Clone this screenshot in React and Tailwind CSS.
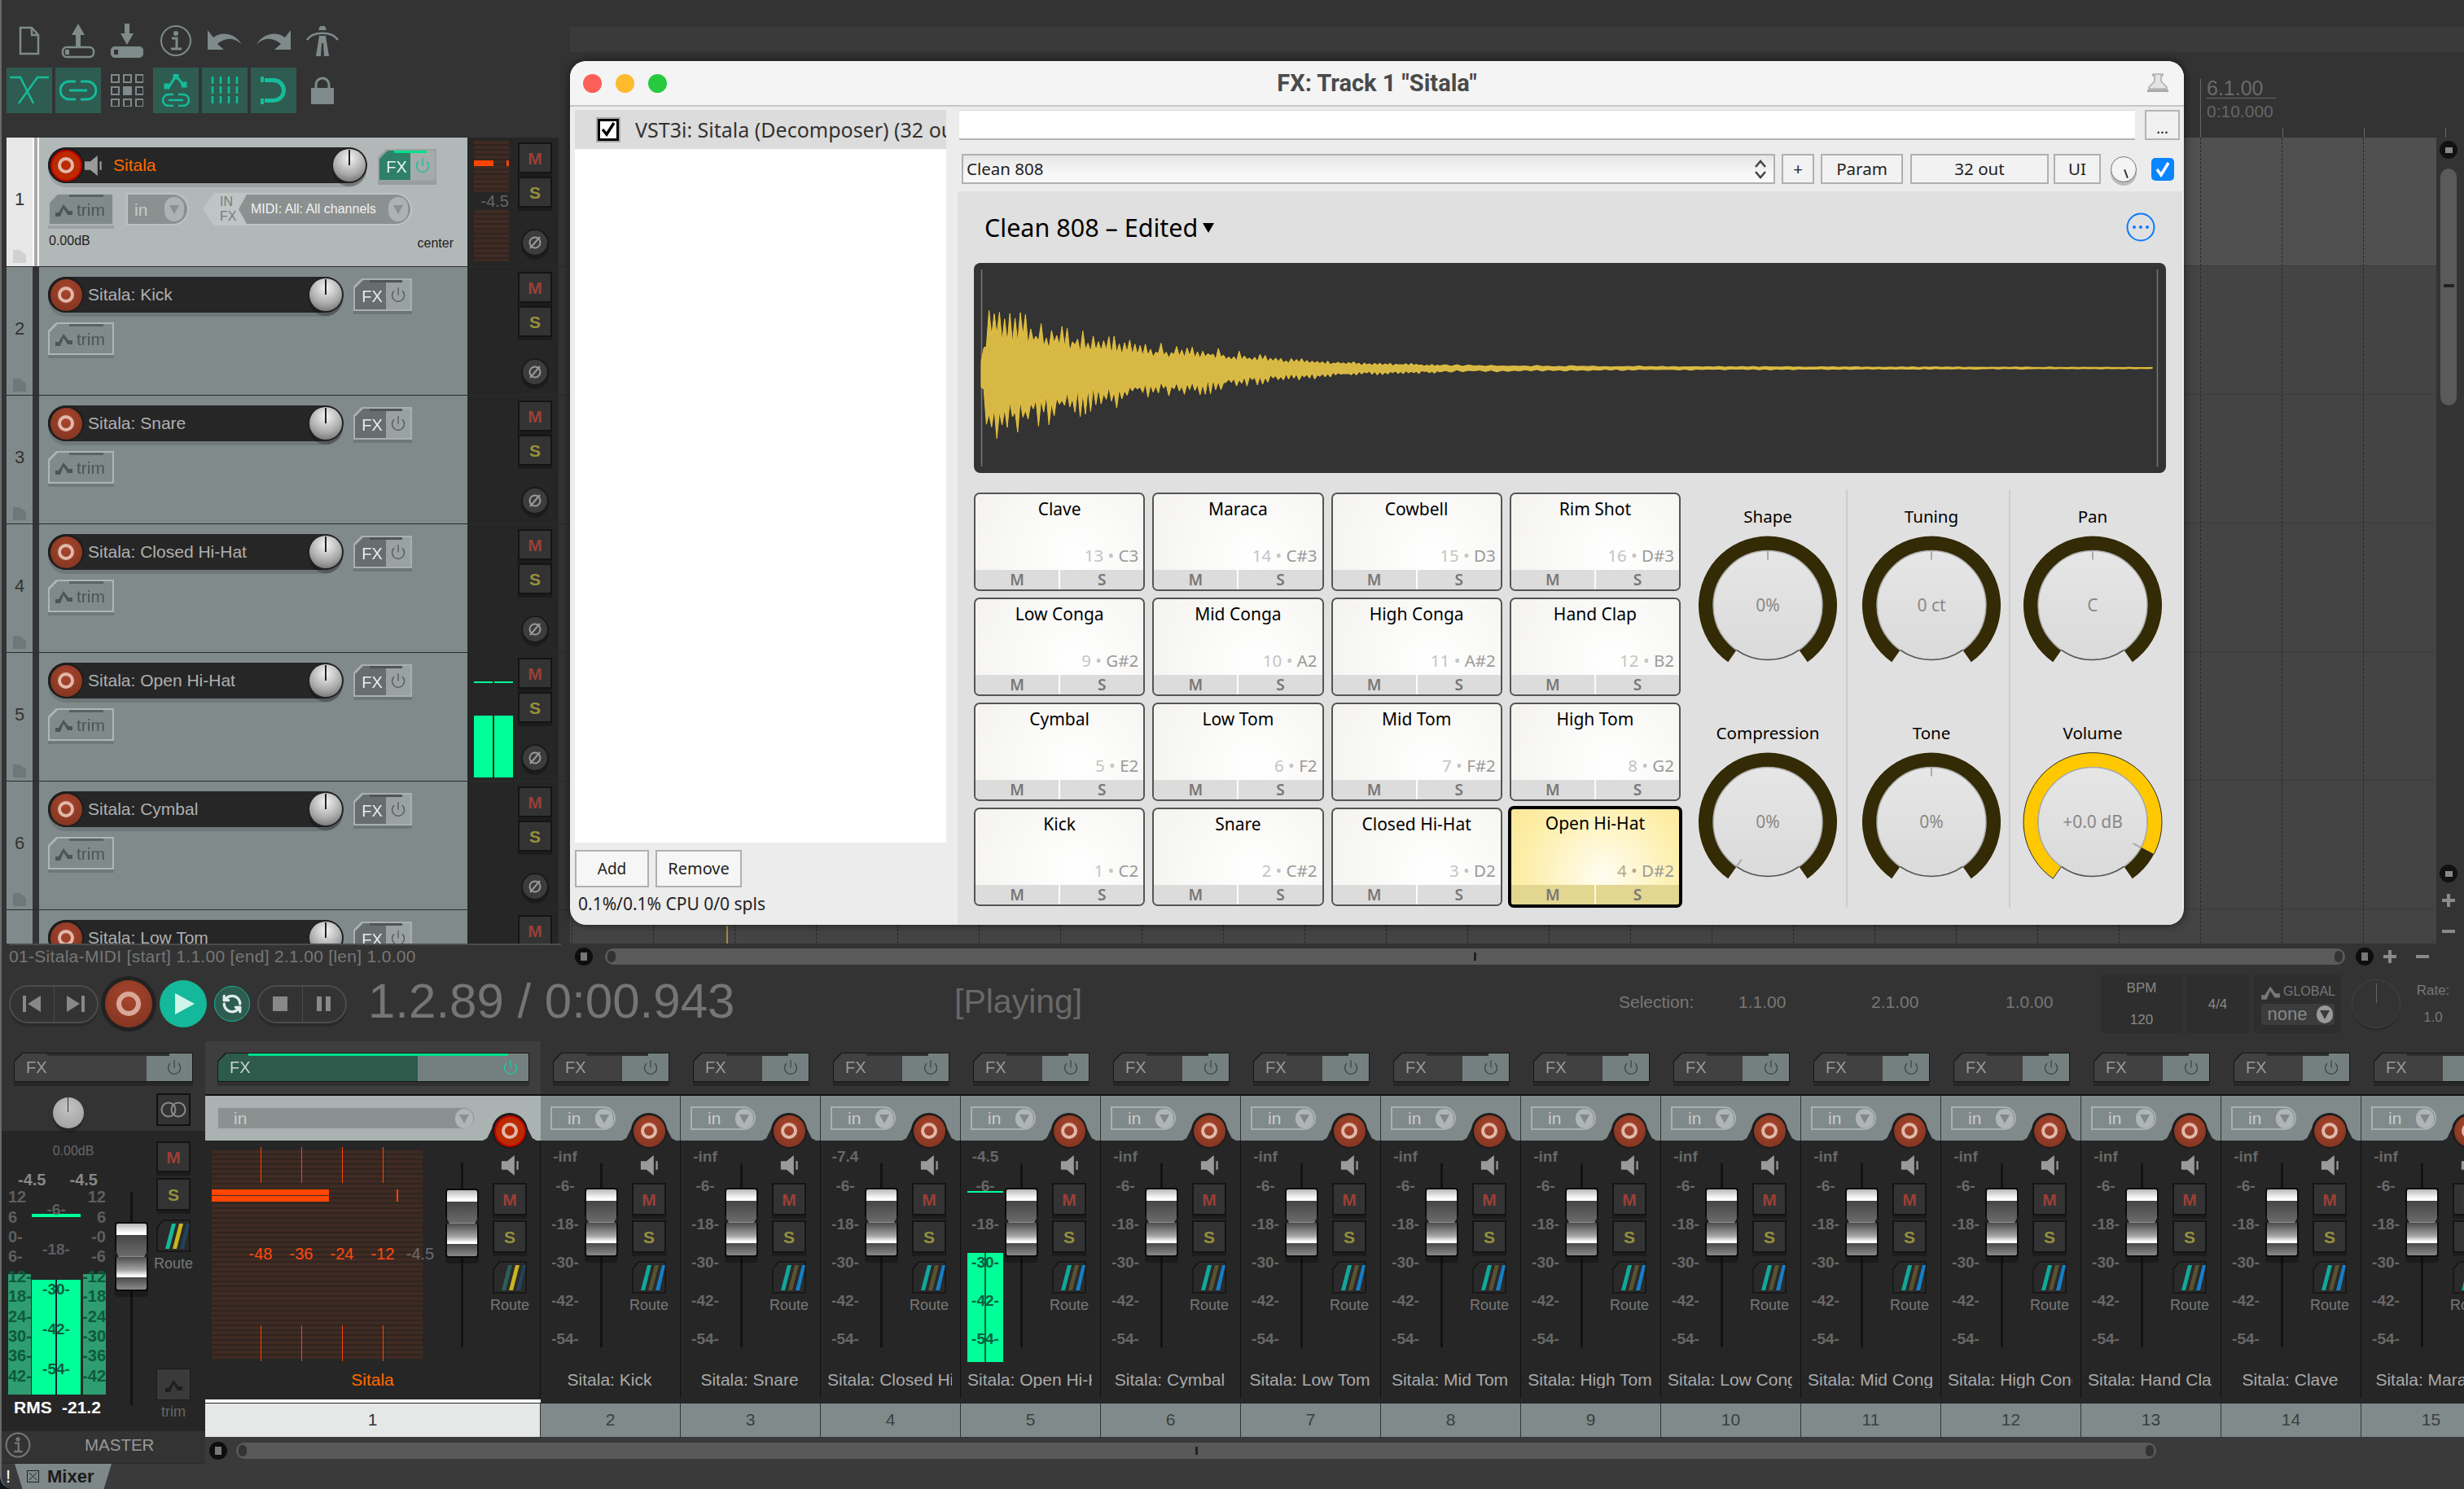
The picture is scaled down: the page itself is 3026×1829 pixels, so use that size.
import React from 'react';
import { Power, RefreshCcw } from 'lucide-react';

const CUT = "[clip-path:polygon(10px_0,100%_0,100%_100%,0_100%,0_10px)]";
const NOTO = "[font-family:'Noto_Sans',sans-serif]";

/* ---------- small shared controls ---------- */
function RecBtn({ big, active }) {
  if (big) {
    return (
      <div className="w-[68px] h-[68px] rounded-full bg-[#222] flex items-center justify-center shrink-0">
        <div className="w-[58px] h-[58px] rounded-full bg-[radial-gradient(circle_at_50%_35%,#a8452c,#7c3220)] flex items-center justify-center">
          <div className="w-[30px] h-[30px] rounded-full border-[6px] border-[#d8a898]" />
        </div>
      </div>
    );
  }
  return (
    <div className="relative w-[44px] h-[44px] rounded-full bg-[#1d1d1d] flex items-center justify-center shrink-0">
      <div className={`w-[39px] h-[39px] rounded-full flex items-center justify-center ${active ? 'bg-[#bb2a00] border-2 border-[#c00000]' : 'bg-[radial-gradient(circle_at_50%_35%,#a8452c,#7c3220)]'}`}>
        <div className="w-[20px] h-[20px] rounded-full border-[4px] border-[#e0b8aa]" />
      </div>
    </div>
  );
}

function Speaker({ className = '' }) {
  return (
    <svg width="23" height="27" viewBox="0 0 26 30" className={`shrink-0 ${className}`}>
      <path d="M1 9 H9 L19 1 V29 L9 21 H1 Z" fill="#9a9a9a" />
      <rect x="22" y="9" width="2.5" height="12" fill="#9a9a9a" />
    </svg>
  );
}

function SmallKnob() {
  return (
    <div className="relative w-[40px] h-[40px] rounded-full shrink-0 bg-[radial-gradient(circle_at_50%_28%,#f4f4f4,#a8a8a8_58%,#5c5c5c)] shadow-[0_0_0_2px_#222,0_5px_0_1px_rgba(0,0,0,0.25)]">
      <div className="absolute left-[19px] top-[1px] w-[1.5px] h-[19px] bg-[#222]" />
    </div>
  );
}

function TriCircle({ className, fill }) {
  return (
    <div className={`rounded-full flex items-center justify-center shrink-0 ${className}`}>
      <svg width="14" height="14" viewBox="0 0 14 14"><path d="M1 2 H13 L7 13 Z" fill={fill} /></svg>
    </div>
  );
}

function EnvIcon({ color = '#4d5555', w = 24, h = 20 }) {
  return (
    <svg width={w} height={h} viewBox="0 0 24 20" className="shrink-0">
      <path d="M2 19 V14 H6 L12 4 L18 12 H23 V17 H17 L12 9 L8 19 Z" fill={color} />
    </svg>
  );
}

function TrackFx({ active }) {
  return (
    <div className="shrink-0 drop-shadow-[0_4px_0_rgba(0,0,0,0.14)]">
      <div className={`${CUT} w-[72px] h-[40px] p-[2px] ${active ? 'bg-[#9aa2a2]' : 'bg-[#a9b0b0]'}`}>
        <div className={`${CUT} relative flex h-full`}>
          <div className={`w-[38px] flex items-center justify-center pl-[4px] pt-[3px] text-[20px] leading-none ${active ? 'bg-[#2f8068] text-[#eaf2f0]' : 'bg-[#686e6e] text-[#e8ecec]'}`}>FX</div>
          <div className={`flex-1 flex items-center justify-center ${active ? 'bg-[#a5abab]' : 'bg-[#9aa1a1]'}`}>
            <Power size={20} strokeWidth={1.5} color={active ? '#14bc9a' : '#4f5555'} />
          </div>
          <div className={`absolute top-0 left-[18px] w-[40px] h-[3px] ${active ? 'bg-[#00e08a]' : 'bg-[#4f5555]'}`} />
        </div>
      </div>
    </div>
  );
}

function MixFx() {
  return (
    <div className="drop-shadow-[0_5px_0_rgba(0,0,0,0.22)] w-[143px]">
      <div className={`${CUT} h-[36px] p-[1px] bg-[#161616]`}>
        <div className={`${CUT} relative flex h-full`}>
          <div className="w-[84px] flex items-center pl-[14px] text-[20px] leading-none bg-[#414141] text-[#9c9c9c]">FX</div>
          <div className="flex-1 flex items-center justify-end pr-[12px] bg-[#748080]"><Power size={20} strokeWidth={1.5} color="#3c4444" /></div>
          <div className="absolute top-0 left-[40px] w-[76px] h-[3px] bg-[#2e2e2e]" />
        </div>
      </div>
    </div>
  );
}

function Trim() {
  return (
    <div className="shrink-0 drop-shadow-[0_4px_0_rgba(0,0,0,0.12)]">
      <div className={`${CUT} w-[81px] h-[40px] p-[2px] bg-[#afb5b5]`}>
        <div className={`${CUT} relative h-full bg-[#808a8a] flex items-center pl-[5px] gap-[4px]`}>
          <EnvIcon />
          <span className="text-[21px] leading-none text-[#4d5555]">trim</span>
          <div className="absolute top-0 left-[24px] w-[42px] h-[3px] bg-[#5a6262]" />
        </div>
      </div>
    </div>
  );
}

function M({ tall }) {
  return <div className={`w-[42px] ${tall ? 'h-[38px]' : 'h-[40px]'} shrink-0 flex items-center justify-center bg-[#333] border-2 border-[#141414] text-[21px] font-bold leading-none text-[#9a3f36] shadow-[0_4px_0_rgba(0,0,0,0.25)]`}>M</div>;
}
function S({ tall }) {
  return <div className={`w-[42px] ${tall ? 'h-[38px]' : 'h-[40px]'} shrink-0 flex items-center justify-center bg-[#333] border-2 border-[#141414] text-[21px] font-bold leading-none text-[#95913c] shadow-[0_4px_0_rgba(0,0,0,0.25)]`}>S</div>;
}

function RouteIcon({ a = '#11a89a', b = '#5a5330', c = '#1580c8' }) {
  return (
    <svg width="42" height="40" viewBox="0 0 42 40" className="shrink-0">
      <path d="M8 1 H41 V39 H1 V10 Z" fill="#2a2a2a" stroke="#141414" strokeWidth="1.5" />
      <path d="M11 36 H16 L24 5 H19 Z" fill={a} />
      <path d="M20 36 H25 L33 5 H28 Z" fill={b} />
      <path d="M29 36 H34 L41 5 H37 Z" fill={c} />
    </svg>
  );
}

function Fader() {
  return (
    <div className="w-[41px] shrink-0 drop-shadow-[0_7px_0_rgba(0,0,0,0.28)]">
      <div className="h-[43px] border-2 border-b-0 border-[#0c0c0c] rounded-t-[4px] bg-[linear-gradient(to_bottom,#b8b8b8_0,#fff_28%,#fff_34%,#464646_35%,#6a6a6a_96%,#9a9a9a_100%)] [clip-path:polygon(0_0,100%_0,100%_78%,88%_100%,12%_100%,0_78%)]" />
      <div className="h-[42px] border-2 border-t-0 border-[#0c0c0c] rounded-b-[4px] bg-[linear-gradient(to_bottom,#4c4c4c_0,#a4a4a4_40%,#fff_58%,#fff_62%,#4a4a4a_63%,#8a8a8a_100%)]" />
    </div>
  );
}

function Phase() {
  return (
    <div className="w-[30px] h-[30px] rounded-full bg-[#3c3c3c] shadow-[0_0_0_2px_#1a1a1a,0_4px_0_2px_rgba(0,0,0,0.25)] flex items-center justify-center shrink-0">
      <svg width="20" height="20" viewBox="0 0 20 20" fill="none" stroke="#9a9a9a" strokeWidth="2"><circle cx="10" cy="10" r="6.5" /><path d="M4 17 L16 3" /></svg>
    </div>
  );
}

/* ---------- toolbar ---------- */
const G = '#7f8a8a';
const T = '#14bc9a';
const topIcons = [
  <svg key="a" width="26" height="44" viewBox="0 0 26 44" fill="none" stroke={G} strokeWidth="2.5"><path d="M2 6 H16 L24 15 V38 H2 Z" /><path d="M16 6 V15 H24" /></svg>,
  <svg key="b" width="42" height="44" viewBox="0 0 42 44"><path d="M21 1 L29 15 H24 V30 H18 V15 H13 Z" fill={G} /><rect x="2" y="30" width="38" height="12" rx="5" fill="none" stroke={G} strokeWidth="2.5" /><rect x="5" y="33" width="5" height="6" fill={G} /></svg>,
  <svg key="c" width="42" height="44" viewBox="0 0 42 44"><path d="M21 27 L13 13 H18 V1 H24 V13 H29 Z" fill={G} /><rect x="1" y="29" width="40" height="14" rx="5" fill={G} /><rect x="5" y="33" width="5" height="6" fill="#333" /></svg>,
  <svg key="d" width="40" height="40" viewBox="0 0 40 40" fill="none" stroke={G} strokeWidth="2"><circle cx="20" cy="20" r="18" /><circle cx="20" cy="11" r="2" fill={G} /><path d="M15 17 H21 V30 M14 30 H27" strokeWidth="3" /></svg>,
  <svg key="e" width="44" height="26" viewBox="0 0 44 26"><path d="M1 0 L1 24 H21 L13 17 C22 9 34 8 43 18 C36 5 20 0 8 9 Z" fill={G} /></svg>,
  <svg key="f" width="44" height="26" viewBox="0 0 44 26"><path d="M43 0 L43 24 H23 L31 17 C22 9 10 8 1 18 C8 5 24 0 36 9 Z" fill={G} /></svg>,
  <svg key="g" width="42" height="38" viewBox="0 0 42 38"><path d="M13 38 L17 13 H25 L29 38 H23 L22 22 H20 L19 38 Z" fill={G} /><path d="M16 6 L18 1 H24 L26 6 Z" fill={G} /><path d="M2 18 C9 7 33 7 40 18" fill="none" stroke={G} strokeWidth="2.5" /></svg>,
];
const IconBtn = ({ on, children }) => (
  <div className="w-[60px] flex justify-center">
    <div className={`w-[56px] h-[56px] flex items-center justify-center ${on ? 'bg-[#2e5c50]' : ''}`}>{children}</div>
  </div>
);
function Toolbar() {
  return (
    <div className="h-[169px] pl-[4px] pt-[28px] shrink-0">
      <div className="flex h-[44px] items-center">
        {topIcons.map((ic, i) => <div key={i} className="w-[60px] flex justify-center">{ic}</div>)}
      </div>
      <div className="flex mt-[11px]">
        <IconBtn on><svg width="50" height="36" viewBox="0 0 50 36" fill="none" stroke={T} strokeWidth="2.5"><path d="M1 2 H14 L30 34" /><path d="M49 2 H35 L12 34" /></svg></IconBtn>
        <IconBtn on><svg width="46" height="26" viewBox="0 0 46 26" fill="none" stroke={T} strokeWidth="3"><path d="M20 2 H12 a11 11 0 0 0 0 22 H20" /><path d="M26 2 H34 a11 11 0 0 1 0 22 H26" /><path d="M12 13 H34" /></svg></IconBtn>
        <IconBtn><svg width="40" height="40" viewBox="0 0 40 40" fill="none" stroke={G} strokeWidth="2">{[0, 1, 2].map(r => [0, 1, 2].map(c => <rect key={`${r}${c}`} x={1 + c * 15} y={1 + r * 15} width="9" height="9" fill={r === 1 && c === 1 ? G : 'none'} />))}</svg></IconBtn>
        <IconBtn on><svg width="38" height="40" viewBox="0 0 38 40" fill="none" stroke={T}><path d="M7 15 H11 L19 2 L28 13 H31 M8 15 V15" strokeWidth="3" /><rect x="5" y="12" width="6" height="6" fill={T} /><rect x="26" y="10" width="6" height="6" fill={T} /><rect x="16" y="0" width="6" height="6" fill={T} /><path d="M16 25 H10 a7 7 0 0 0 0 14 H16 M22 25 H28 a7 7 0 0 1 0 14 H22 M10 32 H28" strokeWidth="2.5" /></svg></IconBtn>
        <IconBtn on><svg width="34" height="34" viewBox="0 0 34 34" fill="none" stroke={T} strokeWidth="2.5" strokeDasharray="9 3">{[2, 12, 22, 32].map(x => <path key={x} d={`M${x} 0 V34`} />)}</svg></IconBtn>
        <IconBtn on><svg width="32" height="34" viewBox="0 0 32 34"><path d="M5 2 H16 a15 15 0 0 1 0 30 H5 V27 H16 a10 10 0 0 0 0 -20 H5 Z" fill={T} /><rect x="0" y="0" width="4" height="7" fill={T} /><rect x="0" y="27" width="4" height="7" fill={T} /></svg></IconBtn>
        <IconBtn><svg width="28" height="34" viewBox="0 0 28 34"><path d="M6 15 V10 a8 8 0 0 1 16 0 V15" fill="none" stroke={G} strokeWidth="3" /><rect x="0" y="14" width="28" height="20" fill={G} /></svg></IconBtn>
      </div>
    </div>
  );
}

/* ---------- track control panels ---------- */
const STRIPES = "bg-[repeating-linear-gradient(to_bottom,#3f2b22_0,#3f2b22_4px,#2f2421_4px,#2f2421_6px)]";

function Track({ n, name, active, peak }) {
  return (
    <div className={`flex h-[158px] shrink-0 ${n > 1 ? 'border-t border-[#2b2b2b]' : ''}`}>
      <div className={`w-[32px] flex flex-col items-center pt-[62px] pb-[4px] ${active ? 'bg-[#e8e8e8]' : 'bg-[#808a8a]'}`}>
        <div className="h-[28px] flex items-center text-[22px] leading-none text-[#333]">{n}</div>
        <svg className="mt-auto" width="16" height="16" viewBox="0 0 16 16"><path d="M0 0 H8 L16 6 V16 H0 Z" fill={active ? '#d0d2d2' : '#6f7878'} /></svg>
      </div>
      <div className={`w-[8px] ${active ? 'bg-[linear-gradient(to_right,#fff_0,#fff_25%,#aaa_25%,#aaa_70%,#fff_70%)]' : 'bg-[#333]'}`} />
      <div className={`w-[526px] pl-[11px] pt-[12px] ${active ? 'bg-[#b2b8b8]' : 'bg-[#808a8a]'}`}>
        <div className="flex items-center h-[44px]">
          <div className={`flex items-center h-[44px] rounded-full bg-[#262626] ${active ? 'w-[391px]' : 'w-[362px]'} shadow-[0_5px_0_rgba(0,0,0,0.12)]`}>
            <RecBtn active={active} />
            {active && <Speaker className="mr-[13px]" />}
            <span className={`text-[21px] leading-none pb-[2px] ${active ? 'text-[#ff6a00]' : 'ml-[5px] text-[#b0b0b0]'}`}>{name}</span>
            <div className="ml-auto mr-[1px]"><SmallKnob /></div>
          </div>
          <div className={active ? 'ml-[14px]' : 'ml-[13px]'}><TrackFx active={active} /></div>
        </div>
        <div className="flex mt-[12px] items-center">
          <Trim />
          {active && (
            <>
              <div className="ml-[15px] w-[77px] h-[40px] bg-[#8b9191] border-2 border-[#bcc2c2] rounded-r-full flex items-center justify-between pl-[8px] pr-[4px]">
                <span className="text-[21px] leading-none text-[#c6cbcb]">in</span>
                <TriCircle className="w-[24px] h-[30px] bg-[#adb2b2]" fill="#8b9191" />
              </div>
              <div className="ml-[17px] w-[257px] h-[40px] bg-[#bfc5c5] rounded-r-full flex [clip-path:polygon(14px_0,100%_0,100%_100%,14px_100%,0_50%)]">
                <div className="w-[44px] pl-[21px] flex flex-col justify-center text-[16px] leading-[18px] text-[#757c7c]"><span>IN</span><span>FX</span></div>
                <div className="flex-1 my-[2px] mr-[2px] rounded-r-full bg-[#8b9191] flex items-center pl-[15px] pr-[3px] justify-between [clip-path:polygon(10px_0,100%_0,100%_100%,10px_100%,0_50%)]">
                  <span className="text-[16px] leading-none text-[#f2f2f2]">MIDI: All: All channels</span>
                  <TriCircle className="w-[24px] h-[30px] bg-[#adb2b2]" fill="#8b9191" />
                </div>
              </div>
            </>
          )}
        </div>
        {active && (
          <div className="flex justify-between items-start mt-[11px] pr-[17px] text-[16px] leading-none text-[#1e1e1e] pl-[1px]">
            <span>0.00dB</span><span className="mt-[3px]">center</span>
          </div>
        )}
      </div>
      <div className="w-[112px] flex bg-[#262626]">
        <div className="w-[62px] pl-[8px]">
          {active && (
            <div className="w-[43px] flex flex-col pt-[4px]">
              <div className={`h-[63px] ${STRIPES} pt-[24px]`}>
                <div className="flex justify-between h-[7px]"><div className="w-[24px] bg-[#ff4500]" /><div className="w-[3px] bg-[#ff4500]" /></div>
              </div>
              <div className="h-[22px] flex items-center justify-end text-[20px] leading-none text-[#666]">-4.5</div>
              <div className={`h-[63px] ${STRIPES}`} />
            </div>
          )}
          {peak && (
            <div className="flex gap-[2px] w-[48px] flex-col">
              <div className="mt-[35px] flex gap-[2px]"><div className="w-[23px] h-[2px] bg-[#00ff99]" /><div className="w-[23px] h-[2px] bg-[#00ff99]" /></div>
              <div className="mt-[38px] flex gap-[2px]"><div className="w-[23px] h-[76px] bg-[#00ff99]" /><div className="w-[23px] h-[76px] bg-[#00ff99]" /></div>
            </div>
          )}
        </div>
        <div className="w-[42px] flex flex-col items-center pt-[6px]">
          <M tall />
          <div className="mt-[4px]"><S tall /></div>
          <div className="mt-[28px]"><Phase /></div>
        </div>
      </div>
    </div>
  );
}

/* ---------- arrange (background behind the FX window) ---------- */
function ArrangeRight() {
  const rows = ['bg-[#505050]', 'bg-[#444]', 'bg-[#444]', 'bg-[#444]', 'bg-[#444]', 'bg-[#444]', 'bg-[#444]'];
  return (
    <div className="flex-1 flex flex-col min-w-0">
      <div className="h-[33px] shrink-0" />
      <div className="h-[31px] shrink-0 bg-[#3a3a3a]" />
      <div className="h-[105px] shrink-0 flex pl-[2002px]">
        <div className="relative w-[100px] mt-[33px] border-l border-[#666] pl-[7px]">
          <div className="h-[24px] w-[85px] border-b border-[#6a6a6a] text-[25px] leading-[22px] text-[#6a6a6a]">6.1.00</div>
          <div className="mt-[4px] text-[21px] leading-[24px] text-[#666]">0:10.000</div>
          <div className="absolute left-[100px] bottom-0 w-[1px] h-[12px] bg-[#666]" />
          <div className="absolute left-[200px] bottom-0 w-[1px] h-[12px] bg-[#666]" />
          <div className="absolute left-[300px] bottom-0 w-[1px] h-[12px] bg-[#666]" />
        </div>
      </div>
      <div className="flex-1 flex min-h-0">
        <div className="relative w-[2292px] overflow-hidden">
          {rows.map((c, i) => <div key={i} className={`h-[158px] border-b border-[#3b3b3b] ${c}`} />)}
          <div className="absolute inset-0 flex pl-[2px]">
            {Array.from({ length: 23 }).map((_, i) => <div key={i} className="w-[100px] h-full shrink-0 border-l border-dashed border-[#262626]" />)}
          </div>
          <div className="absolute left-[192px] bottom-0 w-[2px] h-[22px] bg-[#a08c40]" />
        </div>
        <div className="w-[32px] flex flex-col items-center pr-[2px]">
          <div className="mt-[4px] w-[22px] h-[22px] rounded-full bg-[#111] flex items-center justify-center"><div className="w-[9px] h-[7px] bg-[#888]" /></div>
          <div className="mt-[12px] w-[20px] h-[291px] rounded-full bg-[#5a5a5a] flex items-start justify-center pt-[142px]"><div className="w-[13px] h-[4px] bg-[#222]" /></div>
          <div className="mt-[564px] w-[22px] h-[22px] rounded-full bg-[#111] flex items-center justify-center"><div className="w-[9px] h-[7px] bg-[#888]" /></div>
          <div className="mt-[14px] relative w-[16px] h-[16px] flex items-center justify-center"><div className="w-[16px] h-[4px] bg-[#8a8a8a]" /><div className="absolute w-[4px] h-[16px] bg-[#8a8a8a]" /></div>
          <div className="mt-[28px] w-[16px] h-[4px] bg-[#8a8a8a]" />
        </div>
      </div>
    </div>
  );
}

/* ---------- FX window ---------- */
function wavePath() {
  const env = [[0, 18], [8, 70], [14, 80], [60, 62], [107, 48], [195, 32], [295, 23], [380, 12], [475, 7], [595, 4], [800, 2.4], [1100, 1.5], [1444, 0.9]];
  const at = x => {
    for (let i = 1; i < env.length; i++) {
      if (x <= env[i][0]) {
        const [a, b] = env[i - 1], [c, d] = env[i];
        return b + (d - b) * (x - a) / (c - a);
      }
    }
    return 1;
  };
  const h = x => { const s = Math.sin(x * 12.9898) * 43758.5453; return s - Math.floor(s); };
  const up = [], dn = [];
  let k = 0;
  for (let x = 0; x <= 1444; x += x < 560 ? 3.2 : 7) {
    const odd = k % 2 === 1;
    const n1 = odd ? 0.62 + 0.42 * h(k + 1.3) : 0.42 + 0.22 * h(k + 3.1);
    const n2 = odd ? 0.42 + 0.22 * h(k + 5.9) : 0.6 + 0.42 * h(k + 7.7);
    const e = at(x);
    up.push(`${(x + 9).toFixed(1)},${(129 - e * n1).toFixed(1)}`);
    dn.unshift(`${(x + 9).toFixed(1)},${(129 + e * 1.3 * n2).toFixed(1)}`);
    k++;
  }
  return `M${up.join(' L')} L${dn.join(' L')} Z`;
}

function Waveform() {
  return (
    <div className="w-[1464px] h-[258px] rounded-[8px] bg-[#333] shrink-0 overflow-hidden">
      <svg width="1464" height="258" viewBox="0 0 1464 258">
        <path d="M9.5 8 V250 M1453.5 8 V250" stroke="#777" strokeWidth="1.5" />
        <path d={wavePath()} fill="#d8b845" stroke="#e8c43c" strokeWidth="1" />
      </svg>
    </div>
  );
}

const PADS = [
  ['Clave', '13', 'C3'], ['Maraca', '14', 'C#3'], ['Cowbell', '15', 'D3'], ['Rim Shot', '16', 'D#3'],
  ['Low Conga', '9', 'G#2'], ['Mid Conga', '10', 'A2'], ['High Conga', '11', 'A#2'], ['Hand Clap', '12', 'B2'],
  ['Cymbal', '5', 'E2'], ['Low Tom', '6', 'F2'], ['Mid Tom', '7', 'F#2'], ['High Tom', '8', 'G2'],
  ['Kick', '1', 'C2'], ['Snare', '2', 'C#2'], ['Closed Hi-Hat', '3', 'D2'], ['Open Hi-Hat', '4', 'D#2'],
];

function Pad({ name, num, note, active }) {
  return (
    <div className={`flex flex-col overflow-hidden rounded-[7px] ${active ? 'border-[4px] border-black -m-[2px] bg-[radial-gradient(circle_at_55%_70%,#fffdf2,#fdeea8_70%,#fbe798)]' : 'border-2 border-[#555] bg-[radial-gradient(circle_at_60%_65%,#ffffff,#f4f3ef)]'}`}>
      <div className={`${active ? 'h-[35px]' : 'h-[37px]'} flex items-center justify-center text-[21px] leading-none text-black`}>{name}</div>
      <div className="mt-auto pr-[6px] text-right text-[20.5px] leading-none mb-[8px]">
        <span className={active ? 'text-[#b0ab88]' : 'text-[#c4c4c4]'}>{num} • </span><span className="text-[#9a9a9a]">{note}</span>
      </div>
      <div className="h-[24px] flex gap-[2px] shrink-0 font-semibold text-[19px] leading-none text-[#777]">
        <div className={`flex-1 flex items-center justify-center ${active ? 'bg-[#e2d690]' : 'bg-[#dcdcdc]'}`}>M</div>
        <div className={`flex-1 flex items-center justify-center ${active ? 'bg-[#e2d690]' : 'bg-[#dcdcdc]'}`}>S</div>
      </div>
    </div>
  );
}

const pol = (r, d) => {
  const a = (d - 90) * Math.PI / 180;
  return `${(90 + r * Math.cos(a)).toFixed(2)} ${(92.6 + r * Math.sin(a)).toFixed(2)}`;
};
const ring = (a, b) => `M${pol(85, a)} A85 85 0 ${b - a > 180 ? 1 : 0} 1 ${pol(85, b)} L${pol(67, b)} A67 67 0 ${b - a > 180 ? 1 : 0} 0 ${pol(67, a)} Z`;

function BigKnob({ label, value, gold, tickDeg = 0 }) {
  return (
    <div className="flex flex-col items-center">
      <div className="h-[30px] flex items-center pb-[3px] text-[20.5px] leading-none text-black">{label}</div>
      <div className="relative w-[180px] h-[185px]">
        <svg width="180" height="185" viewBox="0 0 180 185">
          <defs>
            <linearGradient id="kn" x1="0" y1="0" x2="0" y2="1"><stop offset="0" stopColor="#e6e6e6" /><stop offset="1" stopColor="#dadada" /></linearGradient>
          </defs>
          <path d={ring(-145, 145)} fill="#332a06" />
          {gold && <path d={ring(-145, 118)} fill="#ffc800" stroke="#333" strokeWidth="1" />}
          <circle cx="90" cy="92.6" r="67" fill="url(#kn)" stroke="#aaa" strokeWidth="1.5" />
          <path d={`M${pol(67, 145)} A67 67 0 0 1 ${pol(67, 215)}`} fill="none" stroke="#555" strokeWidth="1.5" />
          <path d={`M${pol(67, tickDeg)} L${pol(56, tickDeg)}`} stroke="#aaa" strokeWidth="2" />
        </svg>
        <div className="absolute inset-0 flex items-center justify-center text-[21px] leading-none text-[#888]">{value}</div>
      </div>
    </div>
  );
}

function FxWindow() {
  return (
    <div className={`absolute left-[698px] top-[75px] w-[1982px] h-[1061px] rounded-[20px] overflow-hidden bg-[#ececec] flex flex-col shadow-[0_0_12px_rgba(0,0,0,0.6)] ${NOTO}`}>
      <div className="relative h-[56px] shrink-0 bg-[#f4f4f4] border-b-2 border-[#c6c6c6] flex items-center pl-[16px] gap-[17px]">
        <div className="w-[23px] h-[23px] rounded-full bg-[#fc5f57]" />
        <div className="w-[23px] h-[23px] rounded-full bg-[#fdbb2d]" />
        <div className="w-[23px] h-[23px] rounded-full bg-[#27c93f]" />
        <div className="absolute inset-x-0 top-0 h-[54px] flex items-center justify-center font-bold text-[29px] leading-none text-[#4a4a4a] [font-family:'Roboto',sans-serif]">FX: Track 1 "Sitala"</div>
        <svg className="absolute right-[18px] top-[15px]" width="28" height="24" viewBox="0 0 28 24"><path d="M8 1 H20 V3 H18 V10 L25 17 V19 H3 V17 L10 10 V3 H8 Z" fill="#e4e4e4" stroke="#aaa" strokeWidth="1.5" /><rect x="1" y="20" width="26" height="3" fill="#aaa" /></svg>
      </div>
      <div className="flex-1 flex min-h-0">
        <div className="w-[476px] shrink-0 pl-[6px] pt-[4px] flex flex-col">
          <div className="w-[456px] h-[900px] bg-white shrink-0">
            <div className="h-[48px] bg-[#dcdcdc] flex items-center pl-[28px] overflow-hidden whitespace-nowrap">
              <div className="w-[26px] h-[27px] bg-white border-[3px] border-black shadow-[0_0_0_2px_#aaa] flex items-center justify-center shrink-0">
                <svg width="18" height="18" viewBox="0 0 18 18"><path d="M2 9 L7 15 L16 1" fill="none" stroke="#000" strokeWidth="3.5" /></svg>
              </div>
              <span className="ml-[20px] text-[25px] leading-none text-[#333]">VST3i: Sitala (Decomposer) (32 out)</span>
            </div>
          </div>
          <div className="flex gap-[8px] mt-[9px]">
            <div className="w-[91px] h-[46px] border-2 border-[#b0b0b0] bg-[#f6f6f6] flex items-center justify-center text-[19px] leading-none text-[#222]">Add</div>
            <div className="w-[106px] h-[46px] border-2 border-[#b0b0b0] bg-[#f6f6f6] flex items-center justify-center text-[20px] leading-none text-[#222]">Remove</div>
          </div>
          <div className="mt-[10px] pl-[4px] text-[21px] leading-none text-[#222]">0.1%/0.1% CPU 0/0 spls</div>
        </div>
        <div className="flex-1 min-w-0 flex flex-col">
          <div className="flex pt-[4px] pl-[2px] h-[58px] shrink-0 items-start">
            <div className="w-[1444px] h-[37px] bg-white border-b-2 border-t border-[#b4b4b4] border-t-[#d8d8d8]" />
            <div className="ml-[12px] w-[43px] h-[37px] border-2 border-[#b4b4b4] bg-[#f0f0f0] flex items-end justify-center pb-[4px] text-[18px] leading-none text-[#222]">...</div>
          </div>
          <div className="flex items-center pl-[5px] h-[37px] shrink-0 text-[20.5px] leading-none text-[#222]">
            <div className="w-[999px] h-[37px] border-2 border-[#b0b0b0] bg-[linear-gradient(to_bottom,#e6e6e6,#f8f8f8_70%)] flex items-center pl-[4px] pr-[8px] justify-between">
              <span>Clean 808</span>
              <svg width="16" height="26" viewBox="0 0 16 26" fill="none" stroke="#444" strokeWidth="2.5"><path d="M2 10 L8 3 L14 10 M2 16 L8 23 L14 16" /></svg>
            </div>
            <div className="ml-[8px] w-[40px] h-[37px] border-2 border-[#b0b0b0] bg-[#f2f2f2] flex items-center justify-center">+</div>
            <div className="ml-[8px] w-[101px] h-[37px] border-2 border-[#b0b0b0] bg-[#f2f2f2] flex items-center justify-center">Param</div>
            <div className="ml-[9px] w-[170px] h-[37px] border-2 border-[#b0b0b0] bg-[#f2f2f2] flex items-center justify-center">32 out</div>
            <div className="ml-[6px] w-[58px] h-[37px] border-2 border-[#b0b0b0] bg-[#f2f2f2] flex items-center justify-center">UI</div>
            <div className="relative ml-[12px] w-[32px] h-[32px] rounded-full border border-[#777] bg-[#f4f4f4] shadow-[0_4px_0_#bbb]">
              <div className="absolute left-[17px] top-[15px] w-[1.5px] h-[11px] bg-[#333] -rotate-[20deg]" />
            </div>
            <div className="ml-[18px] w-[28px] h-[28px] rounded-[5px] bg-[#0a84ff] flex items-center justify-center">
              <svg width="20" height="20" viewBox="0 0 20 20"><path d="M3 10 L8 17 L17 2" fill="none" stroke="#fff" strokeWidth="3.5" /></svg>
            </div>
          </div>
          <div className="mt-[9px] w-[1504px] h-[901px] bg-[#e0e0e0] pl-[20px] flex flex-col">
            <div className="h-[88px] w-[1464px] shrink-0 flex items-center justify-between pl-[13px] pr-[13px]">
              <div className="flex items-center gap-[6px] text-[30.5px] leading-none text-black">
                <span>Clean 808 – Edited</span>
                <svg width="14" height="14" viewBox="0 0 14 14"><path d="M0 2 H14 L7 14 Z" fill="#000" /></svg>
              </div>
              <svg width="36" height="36" viewBox="0 0 36 36"><circle cx="18" cy="18" r="16.5" fill="none" stroke="#0a7aff" strokeWidth="2" /><circle cx="10" cy="18" r="2" fill="#0a7aff" /><circle cx="18" cy="18" r="2" fill="#0a7aff" /><circle cx="26" cy="18" r="2" fill="#0a7aff" /></svg>
            </div>
            <Waveform />
            <div className="flex mt-[24px]">
              <div className="w-[868px] grid grid-cols-4 gap-x-[9px] gap-y-[8px] auto-rows-[121px] shrink-0">
                {PADS.map((p, i) => <Pad key={p[0]} name={p[0]} num={p[1]} note={p[2]} active={i === 15} />)}
              </div>
              <div className="flex -mt-[4px] ml-[11px] h-[514px]">
                <div className="w-[192px] pt-[20px] flex flex-col items-center">
                  <BigKnob label="Shape" value="0%" />
                  <div className="mt-[51px]"><BigKnob label="Compression" value="0%" tickDeg={-145} /></div>
                </div>
                <div className="w-[200px] pt-[20px] pl-[8px] border-l-2 border-[#cdcdcd] flex flex-col items-center">
                  <BigKnob label="Tuning" value="0 ct" />
                  <div className="mt-[51px]"><BigKnob label="Tone" value="0%" /></div>
                </div>
                <div className="w-[204px] pt-[20px] border-l-2 border-[#cdcdcd] flex flex-col items-center">
                  <BigKnob label="Pan" value="C" />
                  <div className="mt-[51px]"><BigKnob label="Volume" value="+0.0 dB" gold tickDeg={118} /></div>
                </div>
              </div>
            </div>
          </div>
        </div>
      </div>
    </div>
  );
}

/* ---------- transport ---------- */
function Transport() {
  return (
    <div className="h-[89px] shrink-0 flex items-center pl-[9px] pb-[3px] text-[#777]">
      <div className="w-[110px] h-[47px] rounded-full border-2 border-[#4c4c4c] bg-[#333] shadow-[0_4px_0_#2a2a2a] flex shrink-0">
        <div className="flex-1 flex items-center justify-center border-r border-[#4c4c4c]"><svg width="22" height="20" viewBox="0 0 22 20" fill="#888"><rect width="4" height="20" /><path d="M22 0 V20 L6 10 Z" /></svg></div>
        <div className="flex-1 flex items-center justify-center"><svg width="22" height="20" viewBox="0 0 22 20" fill="#888"><path d="M0 0 V20 L16 10 Z" /><rect x="18" width="4" height="20" /></svg></div>
      </div>
      <div className="ml-[3px]"><RecBtn big /></div>
      <div className="ml-[4px] w-[58px] h-[58px] rounded-full bg-[#14b89a] flex items-center justify-center shrink-0 pl-[4px]"><svg width="24" height="26" viewBox="0 0 24 26"><path d="M0 0 V26 L24 13 Z" fill="#cff5ea" /></svg></div>
      <div className="ml-[9px] w-[44px] h-[44px] rounded-full bg-[#2e5c50] border border-[#14b89a] flex items-center justify-center shrink-0"><RefreshCcw size={26} strokeWidth={3} color="#dfeeea" /></div>
      <div className="ml-[9px] w-[110px] h-[47px] rounded-full border-2 border-[#4c4c4c] bg-[#333] shadow-[0_4px_0_#2a2a2a] flex shrink-0">
        <div className="flex-1 flex items-center justify-center border-r border-[#4c4c4c]"><div className="w-[18px] h-[18px] bg-[#888]" /></div>
        <div className="flex-1 flex items-center justify-center gap-[5px]"><div className="w-[6px] h-[18px] bg-[#888]" /><div className="w-[6px] h-[18px] bg-[#888]" /></div>
      </div>
      <div className="ml-[26px] w-[720px] shrink-0 pb-[6px] text-[60px] leading-none text-[#757575]">1.2.89 / 0:00.943</div>
      <div className="w-[816px] shrink-0 pb-[6px] text-[41px] leading-none text-[#686868]">[Playing]</div>
      <div className="w-[147px] shrink-0 pb-[5px] text-[21px] leading-none text-[#777]">Selection:</div>
      <div className="w-[163px] shrink-0 pb-[5px] text-[21px] leading-none text-[#777]">1.1.00</div>
      <div className="w-[165px] shrink-0 pb-[5px] text-[21px] leading-none text-[#777]">2.1.00</div>
      <div className="w-[117px] shrink-0 pb-[5px] text-[21px] leading-none text-[#777]">1.0.00</div>
      <div className="w-[100px] h-[72px] shrink-0 bg-[#2e2e2e] flex flex-col items-center justify-between py-[8px] text-[17px] leading-none text-[#888]"><span>BPM</span><span>120</span></div>
      <div className="ml-[5px] w-[77px] h-[72px] shrink-0 bg-[#2e2e2e] flex items-center justify-center text-[17px] leading-none text-[#888]">4/4</div>
      <div className="ml-[6px] w-[107px] h-[72px] shrink-0 bg-[#2e2e2e] flex flex-col items-center pt-[10px]">
        <div className="flex items-center gap-[3px] text-[16px] leading-none text-[#777]"><EnvIcon color="#777" w={26} h={22} /><span>GLOBAL</span></div>
        <div className="mt-[4px] w-[90px] h-[26px] rounded-[3px] bg-[#3c3c3c] flex items-center justify-between pl-[8px] pr-[2px] text-[22px] leading-none text-[#888]"><span>none</span><TriCircle className="w-[20px] h-[22px] bg-[#999]" fill="#3c3c3c" /></div>
      </div>
      <div className="relative ml-[13px] w-[60px] h-[60px] rounded-full border border-[#444] bg-[#333] shadow-[0_3px_0_#2a2a2a] shrink-0"><div className="absolute left-[29px] top-[4px] w-[1px] h-[24px] bg-[#666]" /></div>
      <div className="ml-[20px] w-[40px] shrink-0 flex flex-col items-center gap-[16px] text-[17px] leading-none text-[#777]"><span>Rate:</span><span>1.0</span></div>
    </div>
  );
}

/* ---------- mixer ---------- */
function InBox({ wide }) {
  return (
    <div className={`${wide ? 'w-[318px] bg-[#8b9191]' : 'w-[80px]'} h-[29px] border-2 border-[#a8b0b0] rounded-r-full flex items-center justify-between pr-[1px] pl-[19px]`}>
      <span className="text-[21px] leading-none text-[#c8cdcd]">in</span>
      <TriCircle className="w-[22px] h-[24px] bg-[#b0b5b5]" fill={wide ? '#8b9191' : '#808a8a'} />
    </div>
  );
}

function Ctrls({ route }) {
  return (
    <div className="w-[42px] shrink-0 flex flex-col items-center">
      <div className="relative -mt-[34px]">
        <div className="absolute left-[-11px] top-[14px] w-[66px] h-[20px] bg-[#262626] [clip-path:polygon(0_100%,8%_85%,16%_30%,24%_0,76%_0,84%_30%,92%_85%,100%_100%)]" />
        <RecBtn active={route === 'sel'} />
      </div>
      <Speaker className="mt-[7px]" />
      <div className="mt-[8px]"><M /></div>
      <div className="mt-[6px]"><S /></div>
      <div className="mt-[10px]">{route === 'sel' ? <RouteIcon a="#2c5f58" b="#c9b41e" c="#21435c" /> : <RouteIcon />}</div>
      <div className="mt-[2px] h-[24px] flex items-center text-[18px] leading-none text-[#787878] whitespace-nowrap">Route</div>
    </div>
  );
}

const SCALE = ['-6-', '-18-', '-30-', '-42-', '-54-'];

function Strip({ n, name, val, meter }) {
  return (
    <div className="w-[172px] shrink-0 flex flex-col">
      <div className="h-[65px] pt-[14px] pl-[15px]"><MixFx /></div>
      <div className="h-[57px] bg-[#808a8a] border-t-2 border-t-[#111] border-r border-r-[#333] pt-[13px] pl-[12px]"><InBox /></div>
      <div className="relative h-[316px] bg-[#262626] border-r border-[#111] flex flex-col">
        <div className="h-[272px] flex pl-[8px]">
          <div className="relative w-[44px] shrink-0">
            {meter && (
              <>
                <div className="absolute left-0 top-[62px] w-[44px] h-[2px] bg-[#00ff99]" />
                <div className="absolute left-0 bottom-0 w-[44px] h-[134px] bg-[#00ff99]" />
              </>
            )}
            <div className="relative flex flex-col items-center pt-[9px] text-[19px] font-bold leading-none text-[#686868] w-[44px] whitespace-nowrap">
              <div className="h-[20px] flex items-center">{val}</div>
              <div className="mt-[16px] flex flex-col gap-[27px]">
                {SCALE.map((s, i) => <div key={s} className={`h-[20px] flex items-center justify-center ${meter && i > 1 ? 'text-[#0a5f40]' : ''}`}>{s}</div>)}
              </div>
            </div>
            {meter && <div className="absolute left-[21px] bottom-0 w-[1.5px] h-[134px] bg-[#0a5f40]" />}
          </div>
          <div className="relative ml-[2px] w-[41px] shrink-0 pt-[58px]">
            <div className="absolute left-[19px] top-[28px] w-[3px] h-[226px] bg-[#121212]" />
            <div className="relative"><Fader /></div>
          </div>
          <div className="ml-[17px]"><Ctrls /></div>
        </div>
        <div className="h-[44px] ml-[8px] mr-[10px] flex items-center pb-[2px]"><div className="w-full text-center overflow-hidden whitespace-nowrap text-[21px] leading-none text-[#aaa]">{name}</div></div>
      </div>
      <div className="h-[7px] bg-[#262626]" />
      <div className="h-[41px] bg-[#808a8a] border-r border-[#333] flex items-center justify-center pb-[2px] text-[21px] leading-none text-[#3a4040]">{n}</div>
    </div>
  );
}

const TICKS = ['left-[60px]', 'left-[110px]', 'left-[160px]', 'left-[210px]'];
const SEL_LABELS = [['-48', 'left-[40px] text-[#ff4a10]'], ['-36', 'left-[90px] text-[#ff4a10]'], ['-24', 'left-[140px] text-[#ff4a10]'], ['-12', 'left-[190px] text-[#ff4a10]'], ['-4.5', 'left-[236px] text-[#6c6c6c]']];

function SelStrip() {
  return (
    <div className="w-[412px] shrink-0 flex flex-col">
      <div className="h-[65px] pt-[14px] pl-[15px] bg-[#3e3e3e]">
        <div className="drop-shadow-[0_5px_0_rgba(0,0,0,0.22)] w-[383px]">
          <div className={`${CUT} h-[36px] p-[1px] bg-[#161616]`}>
            <div className={`${CUT} relative flex h-full`}>
              <div className="w-[245px] flex items-center pl-[14px] text-[20px] leading-none bg-[#2d5a4a] text-[#c8d4d0]">FX</div>
              <div className="flex-1 flex items-center justify-end pr-[12px] bg-[#748080]"><Power size={20} strokeWidth={1.5} color="#14d0a8" /></div>
              <div className="absolute top-0 left-[37px] w-[319px] h-[3px] bg-[#00e08a]" />
            </div>
          </div>
        </div>
      </div>
      <div className="h-[57px] bg-[#aab2b2] border-t-2 border-[#111] pt-[13px] pl-[14px]"><InBox wide /></div>
      <div className="relative h-[316px] bg-[#262626] border-r border-[#111] flex flex-col">
        <div className="h-[272px] flex pl-[8px]">
          <div className={`relative mt-[12px] w-[259px] h-[256px] shrink-0 ${STRIPES}`}>
            <div className="absolute left-0 top-[48px] w-[144px] h-[7px] bg-[#ff4500]" />
            <div className="absolute left-0 top-[56px] w-[144px] h-[7px] bg-[#ff4500]" />
            <div className="absolute left-[227px] top-[48px] w-[2px] h-[15px] bg-[#ff4500]" />
            {TICKS.map(c => (
              <React.Fragment key={c}>
                <div className={`absolute top-[-4px] w-[1px] h-[44px] bg-[#ff4500] ${c}`} />
                <div className={`absolute top-[215px] w-[1px] h-[44px] bg-[#ff4500] ${c}`} />
              </React.Fragment>
            ))}
            {SEL_LABELS.map(([t, c]) => <div key={t} className={`absolute top-[115px] w-[40px] h-[24px] flex items-center justify-center text-[20px] leading-none ${c}`}>{t}</div>)}
          </div>
          <div className="relative ml-[28px] w-[41px] shrink-0 pt-[59px]">
            <div className="absolute left-[19px] top-[27px] w-[3px] h-[227px] bg-[#121212]" />
            <div className="relative"><Fader /></div>
          </div>
          <div className="ml-[17px]"><Ctrls route="sel" /></div>
        </div>
        <div className="h-[44px] flex items-center justify-center pb-[2px] text-[21px] leading-none text-[#ff6a00]">Sitala</div>
      </div>
      <div className="h-[7px] bg-[#262626] pt-[2px]"><div className="h-[4px] bg-white" /></div>
      <div className="h-[41px] bg-[#e6e8e8] border-r border-[#333] flex items-center justify-center pb-[2px] text-[21px] leading-none text-[#333]">1</div>
    </div>
  );
}

function Master() {
  const L = ['12', '6', '0-', '6-', '12-', '18-', '24-', '30-', '36-', '42-'];
  const R = ['12', '6', '-0', '-6', '-12', '-18', '-24', '-30', '-36', '-42'];
  const C = ['-6-', '-18-', '-30-', '-42-', '-54-'];
  return (
    <div className="w-[250px] shrink-0 flex flex-col h-[519px]">
      <div className="h-[65px] pt-[14px] pl-[15px] shrink-0">
        <div className="drop-shadow-[0_5px_0_rgba(0,0,0,0.22)] w-[220px]">
          <div className={`${CUT} h-[36px] p-[1px] bg-[#161616]`}>
            <div className={`${CUT} relative flex h-full`}>
              <div className="w-[162px] flex items-center pl-[14px] text-[20px] leading-none bg-[#414141] text-[#9c9c9c]">FX</div>
              <div className="flex-1 flex items-center justify-end pr-[12px] bg-[#748080]"><Power size={20} strokeWidth={1.5} color="#3c4444" /></div>
              <div className="absolute top-0 left-[40px] w-[150px] h-[3px] bg-[#2e2e2e]" />
            </div>
          </div>
        </div>
      </div>
      <div className="h-[45px] shrink-0 flex items-center pl-[63px]">
        <div className="w-[38px] h-[38px] rounded-full relative bg-[radial-gradient(circle_at_50%_35%,#c4c4c4,#9a9a9a)] shadow-[0_5px_0_rgba(0,0,0,0.2)]"><div className="absolute left-[18px] top-0 w-[1px] h-[18px] bg-[#333]" /></div>
        <div className="ml-[89px] w-[42px] h-[40px] bg-[#333] border-2 border-[#111] flex items-center justify-center -mt-[7px]">
          <svg width="34" height="20" viewBox="0 0 34 20" fill="none" stroke="#8a8a8a" strokeWidth="2"><circle cx="11" cy="10" r="8.5" /><circle cx="23" cy="10" r="8.5" /></svg>
        </div>
      </div>
      <div className="h-[369px] shrink-0 bg-[#262626] flex pl-[8px]">
        <div className="w-[120px] shrink-0 flex flex-col">
          <div className="h-[50px] flex items-center justify-center text-[16px] leading-none text-[#666] pl-[40px]">0.00dB</div>
          <div className="h-[18px] flex justify-between pl-[12px] pr-[10px] text-[20px] font-bold leading-none text-[#888]"><span>-4.5</span><span>-4.5</span></div>
          <div className="relative h-[255px] mt-[1px] flex">
            <div className="absolute left-0 bottom-0 w-[28px] h-[148px] bg-[#2e9e72]" />
            <div className="absolute right-0 bottom-0 w-[28px] h-[148px] bg-[#2e9e72]" />
            <div className="absolute left-[29px] bottom-0 w-[60px] h-[141px] bg-[#00ff99]" />
            <div className="absolute left-[29px] top-[33px] w-[60px] h-[4px] bg-[#00ff99]" />
            <div className="absolute left-[58px] bottom-0 w-[2px] h-[141px] bg-[#123]" />
            <div className="relative w-[29px] flex flex-col font-bold text-[20px] leading-none">
              {L.map((t, i) => <div key={i} className={`h-[24.4px] flex items-center ${i > 3 ? 'text-[#0d5a3c]' : 'text-[#5e5e5e]'}`}>{t}</div>)}
            </div>
            <div className="relative w-[60px] flex flex-col items-center pt-[17px] gap-[29px] font-bold text-[19px] leading-none">
              {C.map((t, i) => <div key={i} className={`h-[20px] flex items-center ${i > 1 ? 'text-[#0a5f40]' : 'text-[#5e5e5e]'}`}>{t}</div>)}
            </div>
            <div className="relative w-[31px] flex flex-col items-end font-bold text-[20px] leading-none">
              {R.map((t, i) => <div key={i} className={`h-[24.4px] flex items-center ${i > 3 ? 'text-[#0d5a3c]' : 'text-[#5e5e5e]'}`}>{t}</div>)}
            </div>
          </div>
          <div className="h-[30px] flex items-center pl-[7px] text-[21px] font-bold leading-none text-white"><span className="w-[59px]">RMS</span><span>-21.2</span></div>
        </div>
        <div className="relative ml-[11px] w-[41px] shrink-0 pt-[112px]">
          <div className="absolute left-[19px] top-[75px] w-[3px] h-[262px] bg-[#121212]" />
          <div className="relative"><Fader /></div>
        </div>
        <div className="ml-[10px] w-[42px] shrink-0 flex flex-col items-center pt-[13px]">
          <M tall /><div className="mt-[7px]"><S /></div>
          <div className="mt-[11px]"><RouteIcon a="#14b89a" b="#c9b41e" c="#21435c" /></div>
          <div className="h-[28px] flex items-center text-[18px] leading-none text-[#787878]">Route</div>
          <div className="mt-[115px] w-[42px] h-[39px] bg-[#3a3a3a] border border-[#1a1a1a] flex items-center justify-center"><EnvIcon color="#1e1e1e" /></div>
          <div className="h-[28px] flex items-center text-[18px] leading-none text-[#666]">trim</div>
        </div>
      </div>
      <div className="h-[40px] shrink-0 flex items-center pl-[4px] pb-[5px] border-b border-[#2a2a2a]">
        <svg width="32" height="32" viewBox="0 0 40 40" fill="none" stroke="#777" strokeWidth="2.5"><circle cx="20" cy="20" r="18" /><circle cx="20" cy="11" r="2" fill="#777" /><path d="M15 17 H21 V30 M14 30 H27" strokeWidth="3" /></svg>
        <span className="ml-[66px] text-[20.5px] leading-none text-[#999]">MASTER</span>
      </div>
    </div>
  );
}

const STRIPS = [
  [2, 'Sitala: Kick', '-inf'], [3, 'Sitala: Snare', '-inf'], [4, 'Sitala: Closed Hi-Hat', '-7.4'], [5, 'Sitala: Open Hi-Hat', '-4.5', true],
  [6, 'Sitala: Cymbal', '-inf'], [7, 'Sitala: Low Tom', '-inf'], [8, 'Sitala: Mid Tom', '-inf'], [9, 'Sitala: High Tom', '-inf'],
  [10, 'Sitala: Low Conga', '-inf'], [11, 'Sitala: Mid Conga', '-inf'], [12, 'Sitala: High Conga', '-inf'], [13, 'Sitala: Hand Clap', '-inf'],
  [14, 'Sitala: Clave', '-inf'], [15, 'Sitala: Maraca', '-inf'],
];

function ScrollBtn() {
  return <div className="w-[22px] h-[22px] rounded-full bg-[#0e0e0e] flex items-center justify-center shrink-0"><div className="w-[8px] h-[10px] bg-[#777]" /></div>;
}

export default function App() {
  return (
    <div className="w-[3026px] h-[1829px] bg-[#10151a]">
      <div className="relative w-[3026px] h-[1829px] overflow-hidden rounded-bl-[16px] bg-[#333] border-l-2 border-[#6a6a6a] flex flex-col [font-family:'Liberation_Sans',Arial,sans-serif]">
        <div className="flex h-[1159px] shrink-0">
          <div className="w-[698px] shrink-0 flex flex-col">
            <Toolbar />
            <div className="pl-[6px] flex-1 overflow-hidden flex flex-col">
              <Track n={1} name="Sitala" active />
              <Track n={2} name="Sitala: Kick" />
              <Track n={3} name="Sitala: Snare" />
              <Track n={4} name="Sitala: Closed Hi-Hat" />
              <Track n={5} name="Sitala: Open Hi-Hat" peak />
              <Track n={6} name="Sitala: Cymbal" />
              <Track n={7} name="Sitala: Low Tom" />
            </div>
          </div>
          <ArrangeRight />
        </div>

        <div className="h-[31px] shrink-0 flex items-center">
          <div className="w-[698px] h-full shrink-0 pl-[9px] flex items-center">
            <div className="w-[678px] h-full border-t-2 border-[#4c4c4c] flex items-center pb-[3px] text-[21px] leading-none text-[#777] whitespace-nowrap tracking-[0.3px]">01-Sitala-MIDI [start] 1.1.00 [end] 2.1.00 [len] 1.0.00</div>
          </div>
          <div className="ml-[6px]"><ScrollBtn /></div>
          <div className="ml-[15px] w-[2137px] h-[20px] rounded-full bg-[#5a5a5a] flex items-center justify-between px-[3px] shrink-0">
            <div className="w-[10px] h-[14px] rounded-full bg-[#333]" />
            <div className="w-[3px] h-[10px] bg-[#222]" />
            <div className="w-[10px] h-[14px] rounded-full bg-[#333]" />
          </div>
          <div className="ml-[13px]"><ScrollBtn /></div>
          <div className="ml-[12px] relative w-[16px] h-[16px] flex items-center justify-center shrink-0"><div className="w-[16px] h-[4px] bg-[#8a8a8a]" /><div className="absolute w-[4px] h-[16px] bg-[#8a8a8a]" /></div>
          <div className="ml-[24px] w-[16px] h-[4px] bg-[#8a8a8a] shrink-0" />
        </div>

        <Transport />

        <div className="flex h-[519px] shrink-0">
          <Master />
          <div className="flex-1 min-w-0 flex flex-col">
            <div className="flex h-[486px] overflow-hidden">
              <SelStrip />
              {STRIPS.map(s => <Strip key={s[0]} n={s[0]} name={s[1]} val={s[2]} meter={s[3]} />)}
            </div>
            <div className="h-[33px] bg-[#3a3a3a] flex items-center pl-[5px]">
              <ScrollBtn />
              <div className="ml-[11px] w-[2358px] h-[20px] rounded-full bg-[#595959] flex items-center justify-between px-[3px]">
                <div className="w-[10px] h-[14px] rounded-full bg-[#333]" />
                <div className="w-[3px] h-[10px] bg-[#222]" />
                <div className="w-[10px] h-[14px] rounded-full bg-[#333]" />
              </div>
            </div>
          </div>
        </div>

        <div className="flex-1 flex items-stretch bg-[#3a3a3a]">
          <div className="w-[16px] flex items-center justify-center text-[22px] leading-none text-white">!</div>
          <div className="w-[119px] bg-[#7f8888] flex items-center pl-[15px] [clip-path:polygon(0_0,100%_0,92%_100%,8%_100%)]">
            <div className="w-[15px] h-[15px] border border-[#222] flex items-center justify-center shrink-0">
              <svg width="13" height="13" viewBox="0 0 13 13" stroke="#222" strokeWidth="1"><path d="M2 2 L11 11 M11 2 L2 11" /></svg>
            </div>
            <span className="ml-[10px] text-[22px] font-bold leading-none text-[#1a1a1a]">Mixer</span>
          </div>
        </div>

        <FxWindow />
      </div>
    </div>
  );
}
